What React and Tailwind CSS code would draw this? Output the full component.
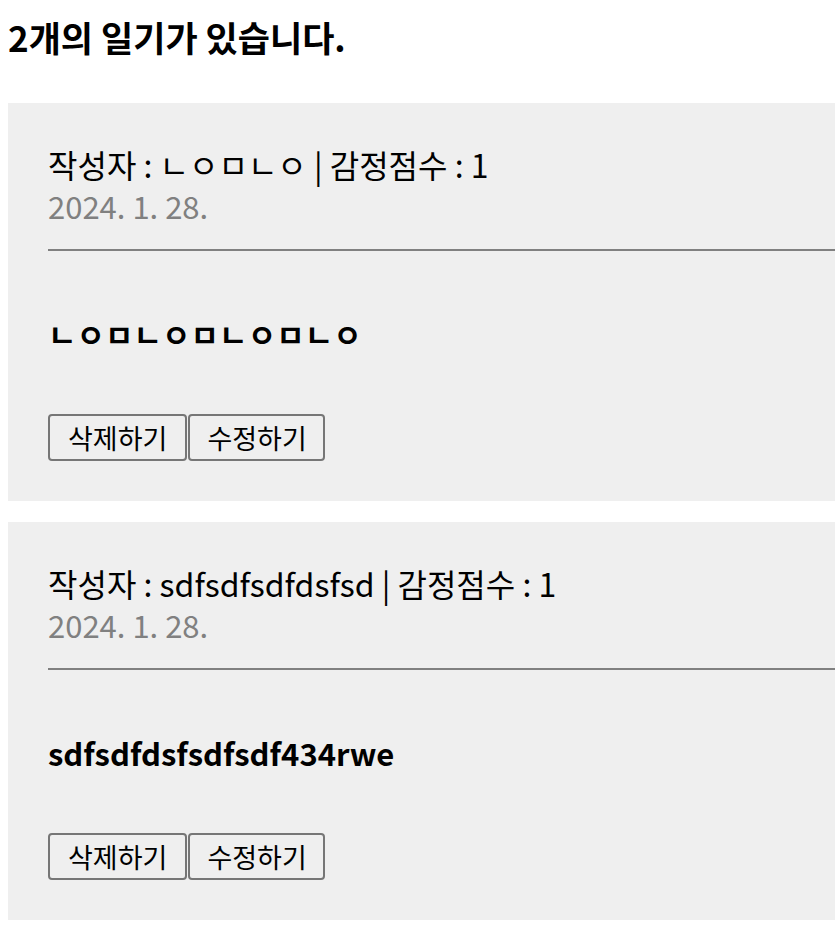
import React from 'react';

const diaries = [
  { id: 1, author: 'ㄴㅇㅁㄴㅇ', emotion: 1, date: '2024. 1. 28.', content: 'ㄴㅇㅁㄴㅇㅁㄴㅇㅁㄴㅇ' },
  { id: 2, author: 'sdfsdfsdfdsfsd', emotion: 1, date: '2024. 1. 28.', content: 'sdfsdfdsfsdfsdf434rwe' },
];

const font = { fontFamily: '"Noto Sans CJK KR", "Noto Sans", sans-serif' };

const DiaryItem = ({ item }) => {
  return (
    <div className="bg-[#efefef] pt-10 pb-10 pl-10 mb-[21px]">
      {/* Info */}
      <div>
        <div className="text-[32px] leading-[42px] text-black">
          작성자 : {item.author} | 감정점수 : {item.emotion}
        </div>
        <div className="text-[31px] leading-[42px] text-[#808080]">{item.date}</div>
      </div>
      <hr className="mt-[22px] border-0 h-[2px] bg-[#808080]" />
      {/* Content */}
      <div className="mt-[62px] text-[31px] leading-[42px] font-bold text-black">
        {item.content}
      </div>
      <div className="mt-[59px] flex gap-px">
        <button className="h-[47px] px-[18px] text-[27px] leading-none border-2 border-[#767676] rounded-[4px] bg-[#efefef] text-black">
          삭제하기
        </button>
        <button className="h-[47px] pl-[17px] pr-[16px] text-[27px] leading-none border-2 border-[#767676] rounded-[4px] bg-[#efefef] text-black">
          수정하기
        </button>
      </div>
    </div>
  );
};

const App = () => {
  return (
    <div className="min-h-screen bg-white pl-2" style={font}>
      <h2 className="text-[35px] leading-[44px] font-bold text-black pt-[15px] mb-[44px]">
        {diaries.length}개의 일기가 있습니다.
      </h2>
      <div>
        {diaries.map((item) => (
          <DiaryItem key={item.id} item={item} />
        ))}
      </div>
    </div>
  );
};

export default App;
